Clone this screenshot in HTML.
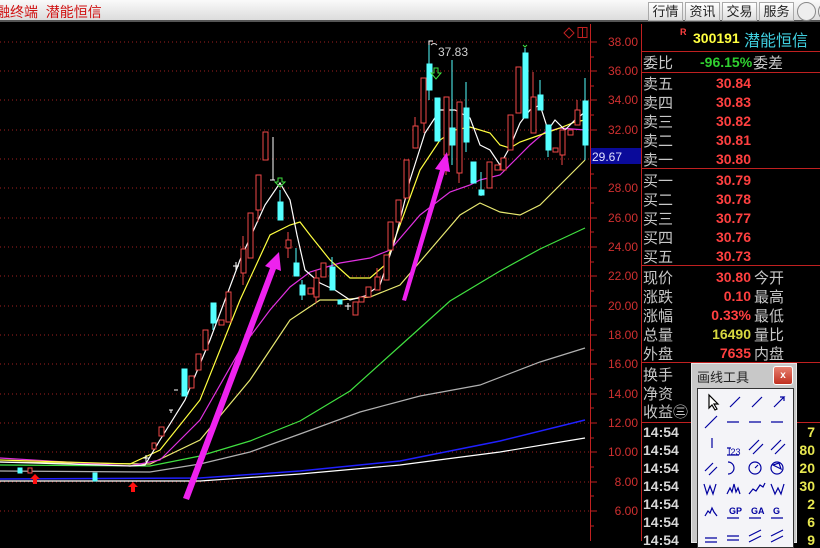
<!DOCTYPE html>
<html><head><meta charset="utf-8">
<style>
*{margin:0;padding:0;box-sizing:border-box}
body{width:820px;height:541px;overflow:hidden;background:#000;font-family:"Liberation Sans","Noto Sans CJK SC",sans-serif;position:relative}
.top{position:absolute;left:0;top:0;width:820px;height:22px;background:linear-gradient(#fafafa,#dcdcdc);border-bottom:2px solid #555}
.top .t{position:absolute;left:-4px;top:2px;color:#d01010;font-size:14px;letter-spacing:0}
.btn{position:absolute;top:2px;height:19px;width:35px;border:1px solid #aaa;background:linear-gradient(#fff,#ddd);font-size:13px;text-align:center;line-height:17px;color:#222}
.ab{position:absolute;font-size:12px;color:#d03030;width:40px;text-align:right;left:598px}
.p{position:absolute;font-size:15px;white-space:nowrap}
.lbl{color:#c8c8c8;left:643px}
.num{color:#ff4040;font-weight:bold;font-family:"Liberation Sans",sans-serif;font-size:14px;text-align:right;width:110px;left:641px}
.tm{color:#d8d8d8;font-weight:bold;left:643px;font-size:14px}
.yv{color:#e8e850;font-weight:bold;left:795px;font-size:14px;width:20px;text-align:right}
</style></head><body>
<div class="top"><span class="t">融终端 &nbsp;潜能恒信</span>
<div class="btn" style="left:648px">行情</div><div class="btn" style="left:685px">资讯</div><div class="btn" style="left:722px">交易</div><div class="btn" style="left:759px">服务</div>
<div style="position:absolute;left:797px;top:2px;width:19px;height:19px;border:1px solid #888;border-radius:50%;background:#eee"></div>
<div style="position:absolute;left:818px;top:2px;width:19px;height:19px;border:1px solid #888;border-radius:50%;background:#eee"></div>
</div>
<svg style="position:absolute;left:0;top:0" width="820" height="541">
<g stroke="#a02020" stroke-width="1" stroke-dasharray="1 3">
<line x1="0" y1="42" x2="590" y2="42"/><line x1="0" y1="71" x2="590" y2="71"/><line x1="0" y1="100" x2="590" y2="100"/><line x1="0" y1="130" x2="590" y2="130"/><line x1="0" y1="159" x2="590" y2="159"/><line x1="0" y1="188" x2="590" y2="188"/><line x1="0" y1="218" x2="590" y2="218"/><line x1="0" y1="247" x2="590" y2="247"/><line x1="0" y1="276" x2="590" y2="276"/><line x1="0" y1="306" x2="590" y2="306"/><line x1="0" y1="335" x2="590" y2="335"/><line x1="0" y1="364" x2="590" y2="364"/><line x1="0" y1="394" x2="590" y2="394"/><line x1="0" y1="423" x2="590" y2="423"/><line x1="0" y1="452" x2="590" y2="452"/><line x1="0" y1="482" x2="590" y2="482"/><line x1="0" y1="511" x2="590" y2="511"/>
</g>
<g stroke="#c02020"><line x1="590.5" y1="24" x2="590.5" y2="541"/><line x1="641.5" y1="24" x2="641.5" y2="541"/>
<line x1="641" y1="51.5" x2="820" y2="51.5"/><line x1="641" y1="72.5" x2="820" y2="72.5"/><line x1="641" y1="168.5" x2="820" y2="168.5"/><line x1="641" y1="265.5" x2="820" y2="265.5"/><line x1="641" y1="362.5" x2="820" y2="362.5"/><line x1="641" y1="422.5" x2="820" y2="422.5"/>
<path d="M591 42h6M591 71h6M591 100h6M591 130h6M591 159h6M591 188h6M591 218h6M591 247h6M591 276h6M591 306h6M591 335h6M591 364h6M591 394h6M591 423h6M591 452h6M591 482h6M591 511h6M591 57h3M591 86h3M591 115h3M591 174h3M591 203h3M591 232h3M591 262h3M591 291h3M591 320h3M591 350h3M591 379h3M591 408h3M591 438h3M591 467h3M591 496h3M591 526h3"/>
<path d="M569 28l5 5-5 5-5-5z" fill="none"/><rect x="578" y="27.5" width="9" height="10" fill="none"/><line x1="582.5" y1="28" x2="582.5" y2="37"/>
</g>
<rect x="591" y="148" width="50" height="16" fill="#0a0a9a"/>
<text x="592" y="161" fill="#e0e0ff" font-size="12">29.67</text>
<!-- MA lines -->
<g fill="none" stroke-width="1.2">
<polyline stroke="#fff" points="0,481 200,481 300,474 400,465 500,452 585,438"/>
<polyline stroke="#2020ff" stroke-width="1.5" points="0,479 200,478 300,471 400,461 500,441 585,420"/>
<polyline stroke="#b0b0b0" points="0,471 150,472 200,464 250,452 300,434 360,412 420,396 480,385 540,362 585,348"/>
<polyline stroke="#40e040" points="0,465 150,466 200,456 250,441 300,421 350,391 400,346 450,301 500,271 540,249 585,228"/>
<polyline stroke="#e8e870" points="0,462 150,464 200,440 250,380 290,320 320,300 340,300 370,297 400,285 430,250 460,215 480,203 500,212 520,215 540,205 560,185 580,165 585,160"/>
<polyline stroke="#e030e0" points="0,458 130,466 160,460 200,420 240,350 270,310 290,287 310,272 340,263 370,258 390,250 420,215 450,192 470,185 480,180 500,175 515,160 530,145 545,132 560,128 585,130"/>
<polyline stroke="#ffff40" points="0,460 130,464 160,450 200,400 240,300 270,235 290,225 300,222 310,235 330,260 350,278 370,278 385,265 400,225 420,170 440,140 455,130 470,127 490,133 500,145 510,148 520,142 540,135 560,128 575,122 585,120"/>
<polyline stroke="#fff" points="0,462 100,465 130,466 145,465 160,440 185,400 210,340 240,260 265,205 280,183 290,200 297,235 305,270 320,283 335,290 350,300 365,296 380,285 395,240 410,180 425,133 440,110 455,110 470,118 480,145 490,150 500,165 510,147 520,123 530,110 540,105 548,130 555,120 565,130 575,120 585,112"/>
</g>
<!-- candles -->
<g stroke="#f04848" fill="#000" stroke-width="1">
<rect x="28" y="468" width="4" height="5"/><rect x="152" y="443" width="4" height="6"/><rect x="159" y="427" width="5" height="9"/>
<rect x="189" y="376" width="5" height="12"/><rect x="196" y="354" width="5" height="16"/><rect x="203" y="330" width="5" height="20"/>
<rect x="219" y="320" width="5" height="5"/><rect x="226" y="292" width="5" height="30"/><rect x="241" y="249" width="5" height="24"/>
<rect x="248" y="213" width="5" height="45"/><rect x="256" y="175" width="5" height="35"/><rect x="263" y="132" width="5" height="28"/>
<rect x="286" y="240" width="5" height="8"/><rect x="308" y="288" width="5" height="6"/><rect x="314" y="278" width="5" height="19"/>
<rect x="321" y="263" width="5" height="14"/><rect x="353" y="302" width="5" height="13"/><rect x="359" y="297" width="5" height="5"/>
<rect x="366" y="287" width="5" height="10"/><rect x="375" y="277" width="5" height="13"/><rect x="384" y="255" width="5" height="25"/>
<rect x="388" y="222" width="5" height="28"/><rect x="396" y="200" width="5" height="22"/><rect x="404" y="160" width="5" height="38"/>
<rect x="413" y="126" width="5" height="22"/><rect x="421" y="78" width="5" height="45"/><rect x="444" y="97" width="5" height="58"/>
<rect x="457" y="102" width="5" height="71"/><rect x="487" y="162" width="5" height="26"/><rect x="495" y="165" width="5" height="5"/>
<rect x="501" y="158" width="5" height="12"/><rect x="508" y="115" width="5" height="35"/><rect x="516" y="67" width="5" height="46"/>
<rect x="531" y="97" width="5" height="36"/><rect x="553" y="148" width="5" height="4"/><rect x="560" y="130" width="5" height="25"/>
<rect x="568" y="130" width="5" height="5"/><rect x="575" y="110" width="5" height="15"/>
<path d="M243 236v13M243 273v12M258 210v12M288 232v8M288 248v10M316 270v8M316 297v6M377 268v9M415 117v9M446 155v20M459 173v10M533 72v25M562 155v10M577 100v10M424 123v10"/>
</g>
<g fill="#55ffff" stroke="#55ffff">
<rect x="18" y="468" width="4" height="5"/><rect x="93" y="473" width="4" height="8"/><rect x="182" y="369" width="5" height="27"/>
<rect x="211" y="303" width="5" height="20"/><rect x="278" y="202" width="5" height="18"/><rect x="294" y="263" width="5" height="13"/>
<rect x="300" y="285" width="5" height="10"/><rect x="330" y="267" width="5" height="23"/><rect x="338" y="300" width="4" height="4"/>
<rect x="427" y="64" width="5" height="26"/><rect x="435" y="98" width="5" height="43"/><rect x="450" y="128" width="5" height="17"/>
<rect x="464" y="108" width="5" height="34"/><rect x="471" y="162" width="5" height="21"/><rect x="479" y="190" width="5" height="5"/>
<rect x="523" y="53" width="5" height="65"/><rect x="538" y="95" width="5" height="15"/><rect x="546" y="125" width="5" height="25"/>
<rect x="583" y="101" width="5" height="44"/>
<path d="M280 190v12M296 248v15M302 280v20M213 323v7M332 257v10M429 45v55M452 60v105M466 82v70M481 172v24M525 48v5M540 80v15M548 150v7M585 78v23M585 145v15" fill="none"/>
</g>
<g stroke="#fff" fill="none"><path d="M146 455v7M143 458h6M169 410h4M171 410v3M174 390h4M236 262v8M233 266h6M273 137v43M270 180h5M348 303v7M345 306h6M429 45l0-4h4"/></g>
<text x="438" y="56" fill="#d0d0d0" font-size="12">37.83</text>
<path d="M431 45q3-3 6 0" stroke="#ddd" fill="none"/>
<!-- green arrows -->
<path d="M278 178h4v4h3l-5 5-5-5h3z M434 68h4v5h3l-5 6-5-6h3z" fill="none" stroke="#40e040"/>
<path d="M523 45l2 2 2-2" stroke="#40e040" fill="none"/>
<!-- red arrows -->
<path d="M35 474l5 5h-3v5h-4v-5h-3z M133 482l5 5h-3v5h-4v-5h-3z" fill="#ff1010"/>
<!-- magenta arrows -->
<g fill="#ee22ee">
<path d="M183 498 L270 268 L265 266 L279 252 L281 271 L276 269 L189 500z"/>
<path d="M402 300 L440 170 L435 169 L447 152 L450 172 L445 171 L406 301z"/>
</g>
</svg>
<!-- axis labels -->
<div class="ab" style="top:35px">38.00</div><div class="ab" style="top:64px">36.00</div><div class="ab" style="top:93px">34.00</div><div class="ab" style="top:123px">32.00</div>
<div class="ab" style="top:181px">28.00</div><div class="ab" style="top:211px">26.00</div><div class="ab" style="top:240px">24.00</div><div class="ab" style="top:269px">22.00</div>
<div class="ab" style="top:299px">20.00</div><div class="ab" style="top:328px">18.00</div><div class="ab" style="top:357px">16.00</div><div class="ab" style="top:387px">14.00</div>
<div class="ab" style="top:416px">12.00</div><div class="ab" style="top:445px">10.00</div><div class="ab" style="top:475px">8.00</div><div class="ab" style="top:504px">6.00</div>
<!-- right panel -->
<div class="p" style="left:680px;top:27px;font-size:9px;color:#ff4040;font-weight:bold">R</div>
<div class="p" style="left:693px;top:30px;font-size:14px;color:#ffff40;font-weight:bold">300191</div>
<div class="p" style="left:744px;top:27px;font-size:16px;color:#40d0e0">潜能恒信</div>
<div class="p lbl" style="top:52px">委比</div>
<div class="p" style="left:700px;top:54px;color:#30d030;font-weight:bold;font-size:14px">-96.15%</div>
<div class="p lbl" style="left:753px;top:52px">委差</div>
<div class="p lbl" style="top:73px">卖五</div><div class="p num" style="top:75px">30.84</div>
<div class="p lbl" style="top:92px">卖四</div><div class="p num" style="top:94px">30.83</div>
<div class="p lbl" style="top:111px">卖三</div><div class="p num" style="top:113px">30.82</div>
<div class="p lbl" style="top:130px">卖二</div><div class="p num" style="top:132px">30.81</div>
<div class="p lbl" style="top:149px">卖一</div><div class="p num" style="top:151px">30.80</div>
<div class="p lbl" style="top:170px">买一</div><div class="p num" style="top:172px">30.79</div>
<div class="p lbl" style="top:189px">买二</div><div class="p num" style="top:191px">30.78</div>
<div class="p lbl" style="top:208px">买三</div><div class="p num" style="top:210px">30.77</div>
<div class="p lbl" style="top:227px">买四</div><div class="p num" style="top:229px">30.76</div>
<div class="p lbl" style="top:246px">买五</div><div class="p num" style="top:248px">30.73</div>
<div class="p lbl" style="top:267px">现价</div><div class="p num" style="top:269px">30.80</div><div class="p lbl" style="left:754px;top:267px">今开</div>
<div class="p lbl" style="top:286px">涨跌</div><div class="p num" style="top:288px">0.10</div><div class="p lbl" style="left:754px;top:286px">最高</div>
<div class="p lbl" style="top:305px">涨幅</div><div class="p num" style="top:307px">0.33%</div><div class="p lbl" style="left:754px;top:305px">最低</div>
<div class="p lbl" style="top:324px">总量</div><div class="p num" style="top:326px;color:#d8d840">16490</div><div class="p lbl" style="left:754px;top:324px">量比</div>
<div class="p lbl" style="top:343px">外盘</div><div class="p num" style="top:345px">7635</div><div class="p lbl" style="left:754px;top:343px">内盘</div>
<div class="p lbl" style="top:364px">换手</div><div class="p lbl" style="top:383px">净资</div><div class="p lbl" style="top:401px">收益㊂</div>
<div class="p tm" style="top:424px">14:54</div><div class="p tm" style="top:442px">14:54</div><div class="p tm" style="top:460px">14:54</div><div class="p tm" style="top:478px">14:54</div><div class="p tm" style="top:496px">14:54</div><div class="p tm" style="top:514px">14:54</div><div class="p tm" style="top:532px">14:54</div>
<div class="p yv" style="top:424px">7</div><div class="p yv" style="top:442px">80</div><div class="p yv" style="top:460px">20</div><div class="p yv" style="top:478px">30</div><div class="p yv" style="top:496px">2</div><div class="p yv" style="top:514px">6</div><div class="p yv" style="top:532px">9</div>
<!-- tool window -->
<div style="position:absolute;left:691px;top:363px;width:106px;height:180px;background:#c8c8c8;border:1px solid #e8e8e8">
<div style="position:absolute;left:5px;top:3px;font-size:13px;color:#222">画线工具</div>
<div style="position:absolute;left:81px;top:2px;width:20px;height:19px;background:linear-gradient(#e88070,#c03020);border:1px solid #fff;border-radius:3px;color:#fff;font-size:10px;text-align:center;line-height:17px;font-weight:bold">x</div>
<div style="position:absolute;left:5px;top:24px;width:97px;height:160px;background:#f4f4f8;border:1px solid #333"></div>
<svg style="position:absolute;left:0;top:0" width="106" height="180" fill="none" stroke="#0000a0" stroke-width="1.2">
<path d="M17 31v13l3-3 3 5 2-1-3-5h4z" stroke="#000" fill="#fff"/>
<path d="M38 43l10-10M60 43l10-10M82 43l10-10l-4 0M92 33v4"/>
<path d="M13 64l12-12M35 58h12M57 58h12M79 58h12"/>
<path d="M20 74v10M35 91h12M35 84h4M57 86l10-10M61 90l10-10M79 86l10-10M83 90l10-10"/>
<path d="M13 107l8-8M17 111l8-8M36 98a6 6 0 0 1 0 12"/>
<circle cx="63" cy="104" r="6"/><circle cx="85" cy="104" r="6"/><path d="M63 104l3-3M81 101l6-2 2 6z"/>
<path d="M12 120l3 10 3-8 3 8 3-10M35 130l3-6 2 4 2-8 2 8 2-4 2 6M57 130l4-5 3 2 4-6 3 2 2-4M79 120l4 10 3-6 3 6 3-10"/>
<path d="M13 152l3-5 2 2 2-5 2 4 3 4"/>
<path d="M35 154h12M57 154h12M79 154h12M35 176h12M35 172h12M57 172l12-6M57 178l12-6M79 172l12-6M79 178l12-6M13 174h12M13 178h12"/>
</svg>
<div style="position:absolute;left:37px;top:142px;font-size:9px;color:#0000a0;font-weight:bold">GP</div>
<div style="position:absolute;left:59px;top:142px;font-size:9px;color:#0000a0;font-weight:bold">GA</div>
<div style="position:absolute;left:81px;top:142px;font-size:9px;color:#0000a0;font-weight:bold">G</div>
<div style="position:absolute;left:36px;top:83px;font-size:9px;color:#0000a0">I23</div>
</div>
</body></html>
